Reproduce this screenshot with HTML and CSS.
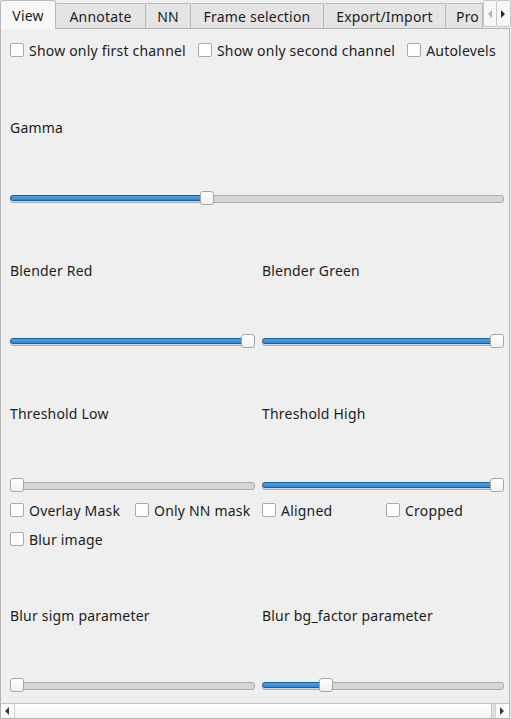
FILE: index.html
```html
<!DOCTYPE html>
<html>
<head>
<meta charset="utf-8">
<link rel="stylesheet" href="styles.css">
</head>
<body>
<div class="window">
  <div class="tabbar">
    <div class="tab active">View</div>
    <div class="tab t-annotate">Annotate</div>
    <div class="tab t-nn">NN</div>
    <div class="tab t-frame">Frame selection</div>
    <div class="tab t-export">Export/Import</div>
    <div class="tab t-pro">Pro</div>
    <div class="scrollbtns">
      <div class="sbtn"><svg width="5" height="8" viewBox="0 0 5 8"><path d="M4 0 L0 4 L4 8 Z" fill="#b5b5b5"/></svg></div>
      <div class="sbtn"><svg width="5" height="8" viewBox="0 0 5 8"><path d="M0 0 L4 4 L0 8 Z" fill="#2b2b2b"/></svg></div>
    </div>
  </div>
  <div class="pane">
    <div class="content">
      <div class="row rowA">
        <label class="cb"><span class="box"></span>Show only first channel</label>
        <label class="cb"><span class="box"></span>Show only second channel</label>
        <label class="cb"><span class="box"></span>Autolevels</label>
      </div>
      <div class="row rowB"><span class="lbl">Gamma</span></div>
      <div class="row rowC">
        <div class="slider full"><div class="fill" style="width:196px"></div><div class="handle" style="left:190px"></div></div>
      </div>
      <div class="row rowD cols">
        <span class="lbl">Blender Red</span><span class="lbl">Blender Green</span>
      </div>
      <div class="row rowE cols">
        <div class="slider"><div class="fill" style="width:243px"></div><div class="handle" style="left:231px"></div></div>
        <div class="slider"><div class="fill" style="width:240px"></div><div class="handle" style="left:228px"></div></div>
      </div>
      <div class="row rowF cols">
        <span class="lbl">Threshold Low</span><span class="lbl">Threshold High</span>
      </div>
      <div class="row rowG cols">
        <div class="slider"><div class="handle" style="left:0px"></div></div>
        <div class="slider"><div class="fill" style="width:240px"></div><div class="handle" style="left:228px"></div></div>
      </div>
      <div class="row rowH cols">
        <div class="pair">
          <label class="cb"><span class="box"></span>Overlay Mask</label>
          <label class="cb"><span class="box"></span>Only NN mask</label>
        </div>
        <div class="pair pair2">
          <label class="cb"><span class="box"></span>Aligned</label>
          <label class="cb"><span class="box"></span>Cropped</label>
        </div>
      </div>
      <div class="row rowI">
        <label class="cb"><span class="box"></span>Blur image</label>
      </div>
      <div class="row rowJ cols">
        <span class="lbl">Blur sigm parameter</span><span class="lbl">Blur bg_factor parameter</span>
      </div>
      <div class="row rowK cols">
        <div class="slider"><div class="handle" style="left:0px"></div></div>
        <div class="slider"><div class="fill" style="width:64px"></div><div class="handle" style="left:57px"></div></div>
      </div>
    </div>
    <div class="hscroll">
      <div class="hbtn left"><svg width="5" height="8" viewBox="0 0 5 8"><path d="M4 0 L0 4 L4 8 Z" fill="#3a3a3a"/></svg></div>
      <div class="hhandle"></div>
      <div class="hgroove"></div>
      <div class="hbtn right"><svg width="5" height="8" viewBox="0 0 5 8"><path d="M0 0 L4 4 L0 8 Z" fill="#3a3a3a"/></svg></div>
    </div>
  </div>
</div>
</body>
</html>
```

FILE: styles.css
```css
* { box-sizing: border-box; }
html, body { margin: 0; padding: 0; }
body {
  background: #efefef;
  font-family: "Noto Sans", "Open Sans", sans-serif;
  font-size: 14px;
  letter-spacing: 0.2px;
  color: #1c1c1c;
  width: 511px;
  height: 719px;
  overflow: hidden;
}
.window { width: 511px; height: 719px; position: relative; }

.tabbar {
  display: flex;
  height: 29px;
  position: relative;
  z-index: 2;
}
.tab {
  height: 25px;
  margin-top: 3px;
  background: #e4e4e4;
  border: 1px solid #b9b9b9;
  border-left: none;
  border-bottom: none;
  display: flex;
  align-items: center;
  justify-content: center;
  white-space: nowrap;
  border-radius: 2px 2px 0 0;
}
.tab.active {
  height: 29px;
  margin-top: 0;
  width: 56px;
  background: #f7f7f7;
  border-left: 1px solid #b9b9b9;
  padding-top: 1px;
  border-radius: 3px 3px 0 0;
}
.t-annotate { width: 90px; }
.t-nn { width: 45px; }
.t-frame { width: 133px; }
.t-export { width: 122px; }
.t-pro { width: 37px; justify-content: flex-start; padding-left: 10px; }
.scrollbtns {
  position: absolute;
  right: 0;
  top: 0;
  display: flex;
  height: 27px;
}
.sbtn {
  width: 14px;
  height: 27px;
  background: #f7f7f7;
  border: 1px solid #c6c6c6;
  border-radius: 2px;
  display: flex;
  align-items: center;
  justify-content: center;
}
.sbtn + .sbtn { margin-left: -1px; width: 15px; }

.pane {
  position: absolute;
  top: 28px;
  left: 0;
  width: 510px;
  height: 691px;
  border: 1px solid #b4b4b4;
  background: #efefef;
  z-index: 1;
  display: flex;
  flex-direction: column;
}
.content {
  flex: 1;
  padding: 0 0 0 9px;
  overflow: hidden;
}
.row { display: flex; align-items: center; }
.cols { display: grid; grid-template-columns: 245px 242px; column-gap: 7px; }
.cols > * { align-self: center; }
.rowA { height: 42px; }
.rowB { height: 112px; }
.rowC { height: 30px; }
.rowD { height: 114px; }
.rowE { height: 28px; }
.rowF { height: 116px; }
.rowG { height: 28px; }
.rowH { height: 22px; }
.rowI { height: 36px; }
.rowJ { height: 116px; }
.rowK { height: 24px; }

.cb {
  display: flex;
  align-items: center;
  white-space: nowrap;
  margin-right: 12px;
  flex: none;
}
.box {
  width: 14px;
  height: 14px;
  background: #ffffff;
  border: 1px solid #a9a9a9;
  border-radius: 2px;
  margin-right: 5px;
  flex: none;
}
.pair { display: flex; }
.pair .cb { margin-right: 0; }
.pair .cb:first-child { width: 125px; }
.pair2 .cb:first-child { width: 124px; }

.slider {
  position: relative;
  height: 14px;
  width: 100%;
}
.slider.full { width: 494px; }
.slider::before {
  content: "";
  position: absolute;
  left: 0;
  right: 0;
  top: 4px;
  height: 6px;
  background: #d6d6d6;
  border: 1px solid #acacac;
  border-radius: 3px;
}
.fill {
  position: absolute;
  left: 0;
  top: 4px;
  height: 6px;
  background: linear-gradient(#4fa4e6, #2f86d2);
  border: 1px solid #1c5d94;
  border-radius: 3px;
}
.handle {
  position: absolute;
  top: 0;
  width: 14px;
  height: 14px;
  background: linear-gradient(#ffffff, #f0f0f0);
  border: 1px solid #a6a6a6;
  border-radius: 3px;
}

.hscroll {
  height: 15px;
  border-top: 1px solid #c2c2c2;
  display: flex;
  background: #fafafa;
  flex: none;
}
.hbtn {
  width: 14px;
  display: flex;
  align-items: center;
  justify-content: center;
  background: #fbfbfb;
}
.hbtn.left { border-right: 1px solid #d4d4d4; }
.hhandle { flex: 1; background: linear-gradient(#fdfdfd, #f3f3f3); }
.hgroove { width: 4px; background: #dedede; border-left: 1px solid #c8c8c8; }
.hbtn.right { border-left: 1px solid #d4d4d4; }
```
